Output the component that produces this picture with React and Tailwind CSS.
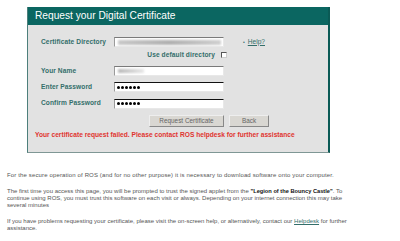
import React from "react";

const F = { fontFamily: '"Liberation Sans", Arial, sans-serif' };

function Input({ children, dark }) {
  return (
    <div
      className={`relative w-[110px] h-[10px] bg-white border border-t-[#7a7a7a] border-l-[#9a9a9a] border-r-[#e8e8e8] border-b-[#e8e8e8] overflow-hidden ${dark ? "border-t-[#111]" : ""}`}
    >
      {children}
    </div>
  );
}

function Dots() {
  return (
    <div className="flex items-center h-full pl-[2px] gap-[1px]">
      {[0, 1, 2, 3, 4, 5].map((i) => (
        <span key={i} className="block w-[3px] h-[3px] rounded-full bg-black" />
      ))}
    </div>
  );
}

function Row({ label, children, className = "" }) {
  return (
    <div className={`flex items-center pl-[6px] ${className}`}>
      <div className="w-[73px] text-[6.6px] font-bold text-[#336e6a] leading-none tracking-[0.1px]">{label}</div>
      {children}
    </div>
  );
}

export default function App() {
  return (
    <div className="w-[400px] h-[241px] bg-white overflow-hidden" style={F}>
      <div className="pt-[7px] pl-[27px]">
        <div className="w-[303px] h-[146px] bg-[#e2e2e2] border-l border-l-[#4d7f7b] border-r-2 border-r-[#0b5a55] border-b border-b-[#7f9795] flex flex-col">
          <div className="h-[18px] bg-[#0b6661] flex items-center pl-[7px] text-white text-[10.2px] leading-none">
            Request your Digital Certificate
          </div>
          <div className="pl-[7px] flex flex-col">
            <Row label="Certificate Directory" className="mt-[12px] h-[10px]">
              <Input>
                <div className="absolute left-[3px] right-[2px] top-[2px] h-[5px] bg-gradient-to-r from-[#c8c8c8] via-[#b0b0b0] to-[#d0d0d0] blur-[1px]" />
              </Input>
              <div className="ml-[19px] flex items-center text-[#336e6a] text-[6.6px] leading-none">
                <span className="text-[5px] mr-[3px]">•</span>
                <span className="underline">Help?</span>
              </div>
            </Row>
            <div className="mt-[4px] h-[8px] pl-[6px] w-[192px] flex items-center justify-end">
              <span className="text-[6.6px] font-bold text-[#336e6a] leading-none tracking-[0.1px]">Use default directory</span>
              <div className="ml-[6px] w-[6px] h-[6px] bg-white border border-[#555] border-b-[#ccc] border-r-[#ccc]" />
            </div>
            <Row label="Your Name" className="mt-[7px] h-[10px]">
              <Input>
                <div className="absolute left-[3px] w-[26px] top-[2px] h-[4px] bg-gradient-to-r from-[#b8b8b8] to-[#e8e8e8] blur-[1px]" />
              </Input>
            </Row>
            <Row label="Enter Password" className="mt-[6px] h-[10px]">
              <Input dark>
                <Dots />
              </Input>
            </Row>
            <Row label="Confirm Password" className="mt-[6px] h-[11px]">
              <Input dark>
                <Dots />
              </Input>
            </Row>
            <div className="mt-[6px] h-[12px] flex pl-[114px] gap-[5px]">
              <div className="w-[75px] h-[12px] bg-[#d9d7d2] border border-[#eee] border-r-[#888] border-b-[#888] flex items-center justify-center text-[6.4px] text-[#666] leading-none">
                Request Certificate
              </div>
              <div className="w-[40px] h-[12px] bg-[#d9d7d2] border border-[#eee] border-r-[#888] border-b-[#888] flex items-center justify-center text-[6.4px] text-[#666] leading-none">
                Back
              </div>
            </div>
            <div className="mt-[4px] h-[8px] flex items-center text-[6.65px] font-bold text-[#e0342f] leading-none">
              Your certificate request failed. Please contact ROS helpdesk for further assistance
            </div>
          </div>
        </div>
      </div>
      <div className="pl-[7px] pt-[19px] text-[6px] leading-[7px] text-[#555] w-[390px]">
        <p className="tracking-[0.14px]">For the secure operation of ROS (and for no other purpose) it is necessary to download software onto your computer.</p>
        <p className="mt-[9px]">
          The first time you access this page, you will be prompted to trust the signed applet from the{" "}
          <b className="text-[#111] text-[5.7px]">"Legion of the Bouncy Castle"</b>. To
          <br />
          continue using ROS, you must trust this software on each visit or always. Depending on your internet connection this may take
          <br />
          several minutes
        </p>
        <p className="mt-[9px]">
          If you have problems requesting your certificate, please visit the on-screen help, or alternatively, contact our{" "}
          <span className="underline text-[#336e6a]">Helpdesk</span> for further
          <br />
          assistance.
        </p>
      </div>
    </div>
  );
}
